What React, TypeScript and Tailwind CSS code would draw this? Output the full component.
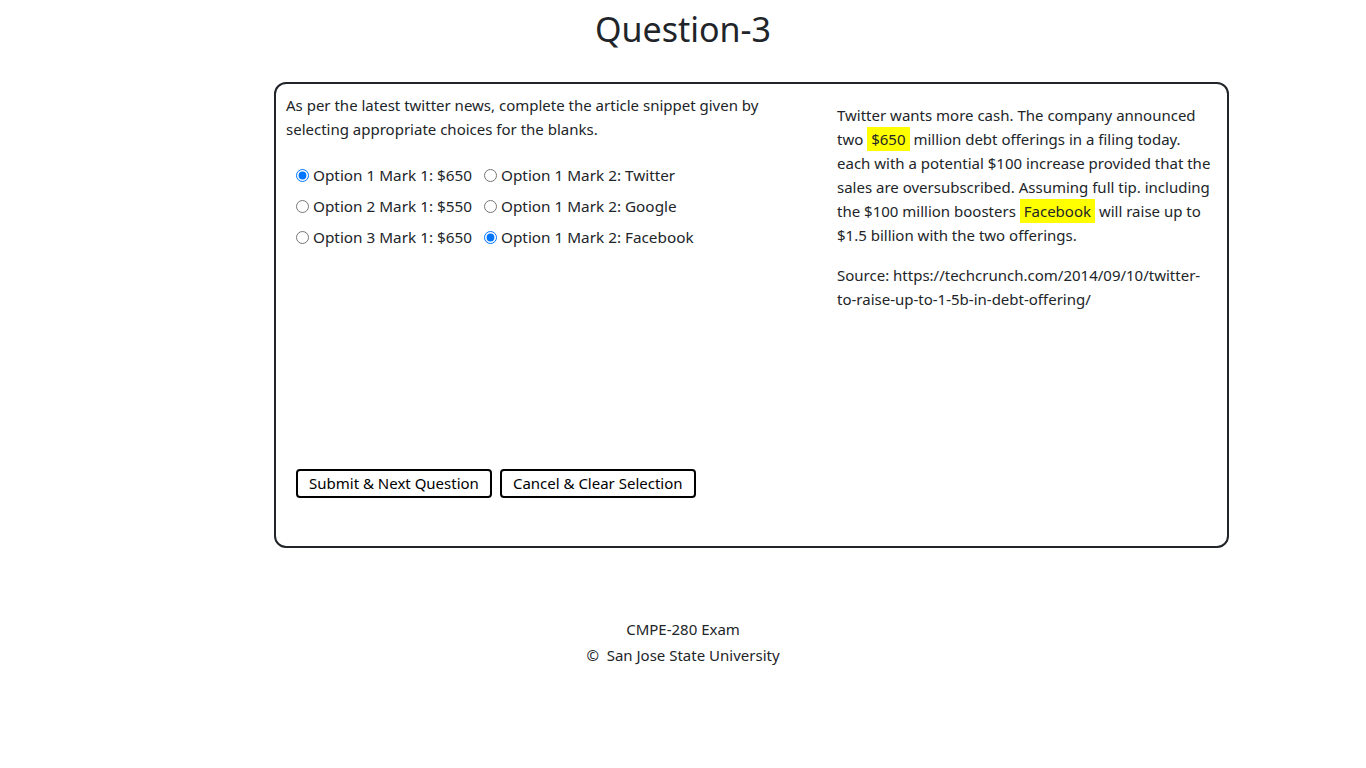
import React from 'react';

const options = [
  { left: 'Option 1 Mark 1: $650', right: 'Option 1 Mark 2: Twitter', leftOn: true, rightOn: false },
  { left: 'Option 2 Mark 1: $550', right: 'Option 1 Mark 2: Google', leftOn: false, rightOn: false },
  { left: 'Option 3 Mark 1: $650', right: 'Option 1 Mark 2: Facebook', leftOn: false, rightOn: true },
];

const Radio = ({ name, label, on }: { name: string; label: string; on: boolean }) => (
  <label className="flex items-center gap-[4px] h-6">
    <input type="radio" name={name} defaultChecked={on} className="m-0 w-[13px] h-[13px]" />
    <span>{label}</span>
  </label>
);

export default function App() {
  return (
    <div className="min-h-[768px] bg-white text-[#212529] font-['Noto_Sans',sans-serif] text-[15px]">
      <h1 className="pt-[5px] text-center text-[34px] leading-[48px]">Question-3</h1>

      <div className="pl-[274px] mt-[29px]">
        <div className="w-[955px] h-[466px] border-2 border-[#212529] rounded-[12px] flex">
          <div className="w-[549px] pl-[10px] pr-3 pt-[9px]">
            <p className="leading-6">
              As per the latest twitter news, complete the article snippet given by selecting appropriate choices for the blanks.
            </p>
            <div className="mt-[22px] pl-[10px] flex flex-col gap-[7px] text-[15.3px]">
              {options.map((o, i) => (
                <div key={i} className="grid grid-cols-[188px_auto]">
                  <Radio name="mark1" label={o.left} on={o.leftOn} />
                  <Radio name="mark2" label={o.right} on={o.rightOn} />
                </div>
              ))}
            </div>
            <div className="mt-[220px] pl-[10px] flex gap-2">
              <button className="h-[29px] px-[11px] border-2 border-black rounded-[4px] bg-white text-black leading-none">
                Submit &amp; Next Question
              </button>
              <button className="h-[29px] px-[11px] border-2 border-black rounded-[4px] bg-white text-black leading-none">
                Cancel &amp; Clear Selection
              </button>
            </div>
          </div>

          <div className="flex-1 pl-[12px] pr-3 pt-[19px] leading-6">
            <p>
              Twitter wants more cash. The company announced two{' '}
              <span className="inline-block bg-[#ffff00] px-1">$650</span> million debt offerings in a filing today. each with a potential $100 increase provided that the sales are oversubscribed. Assuming full tip. including the $100 million boosters{' '}
              <span className="inline-block bg-[#ffff00] px-1">Facebook</span> will raise up to $1.5 billion with the two offerings.
            </p>
            <p className="mt-4">Source: https://techcrunch.com/2014/09/10/twitter-to-raise-up-to-1-5b-in-debt-offering/</p>
          </div>
        </div>
      </div>

      <footer className="mt-[68px] text-center leading-[26px]">
        <p>CMPE-280 Exam</p>
        <p>©&nbsp; San Jose State University</p>
      </footer>
    </div>
  );
}
